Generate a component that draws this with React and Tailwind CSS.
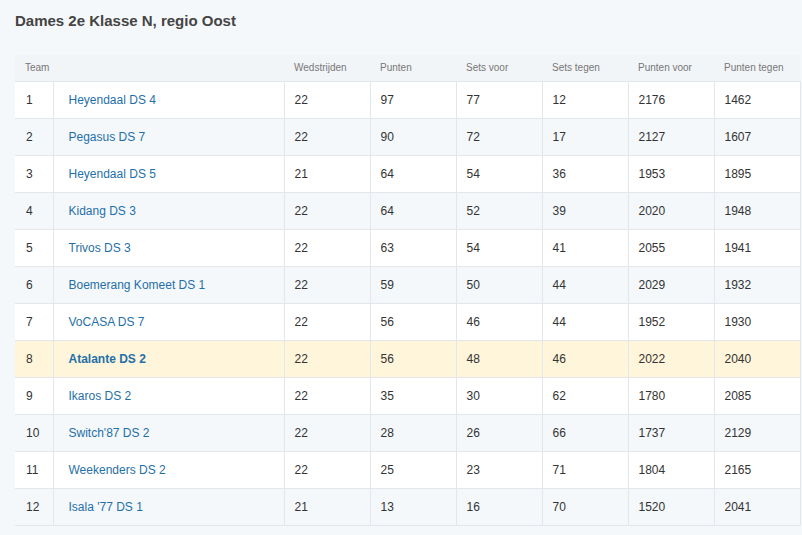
const rows = [
    [1, 'Heyendaal DS 4', 22, 97, 77, 12, 2176, 1462],
    [2, 'Pegasus DS 7', 22, 90, 72, 17, 2127, 1607],
    [3, 'Heyendaal DS 5', 21, 64, 54, 36, 1953, 1895],
    [4, 'Kidang DS 3', 22, 64, 52, 39, 2020, 1948],
    [5, 'Trivos DS 3', 22, 63, 54, 41, 2055, 1941],
    [6, 'Boemerang Komeet DS 1', 22, 59, 50, 44, 2029, 1932],
    [7, 'VoCASA DS 7', 22, 56, 46, 44, 1952, 1930],
    [8, 'Atalante DS 2', 22, 56, 48, 46, 2022, 2040],
    [9, 'Ikaros DS 2', 22, 35, 30, 62, 1780, 2085],
    [10, "Switch'87 DS 2", 22, 28, 26, 66, 1737, 2129],
    [11, 'Weekenders DS 2', 22, 25, 23, 71, 1804, 2165],
    [12, "Isala '77 DS 1", 21, 13, 16, 70, 1520, 2041],
];

const headers = ['Wedstrijden', 'Punten', 'Sets voor', 'Sets tegen', 'Punten voor', 'Punten tegen'];

export default function App() {
    return (
        <div className="min-h-[535px] bg-[#f5f8fa] pl-[15px] pt-[12px] font-['Liberation_Sans',Arial,sans-serif] text-[#333]">
            <h1 className="text-[15px] font-bold leading-[18px] text-[#444]">Dames 2e Klasse N, regio Oost</h1>

            <table className="mt-[25px] w-[785px] table-fixed border-collapse text-[12px]">
                <colgroup>
                    <col className="w-[38px]" />
                    <col className="w-[231px]" />
                    {headers.map((h) => (
                        <col key={h} className="w-[86px]" />
                    ))}
                </colgroup>
                <thead>
                    <tr className="h-[26px] border-b border-[#e3e7eb] bg-[#f2f5f8] text-left text-[10px] text-[#777]">
                        <th colSpan={2} className="px-[10px] font-normal">Team</th>
                        {headers.map((h) => (
                            <th key={h} className="px-[10px] font-normal">{h}</th>
                        ))}
                    </tr>
                </thead>
                <tbody>
                    {rows.map((r, i) => {
                        const mine = r[0] === 8;
                        const bg = mine ? 'bg-[#fff5da]' : i % 2 === 0 ? 'bg-white' : 'bg-[#f4f8fb]';
                        return (
                            <tr key={r[0]} className={`h-[37px] border-b border-[#e3e7eb] ${bg}`}>
                                <td className="border-r border-[#e3e7eb] px-[11px]">{r[0]}</td>
                                <td className={`border-r border-[#e3e7eb] px-[15px] text-[#1f6fa8] ${mine ? 'font-bold' : ''}`}>
                                    {r[1]}
                                </td>
                                {r.slice(2).map((v, j) => (
                                    <td key={j} className="border-r border-[#e3e7eb] px-[10px]">{v}</td>
                                ))}
                            </tr>
                        );
                    })}
                </tbody>
            </table>
        </div>
    );
}
